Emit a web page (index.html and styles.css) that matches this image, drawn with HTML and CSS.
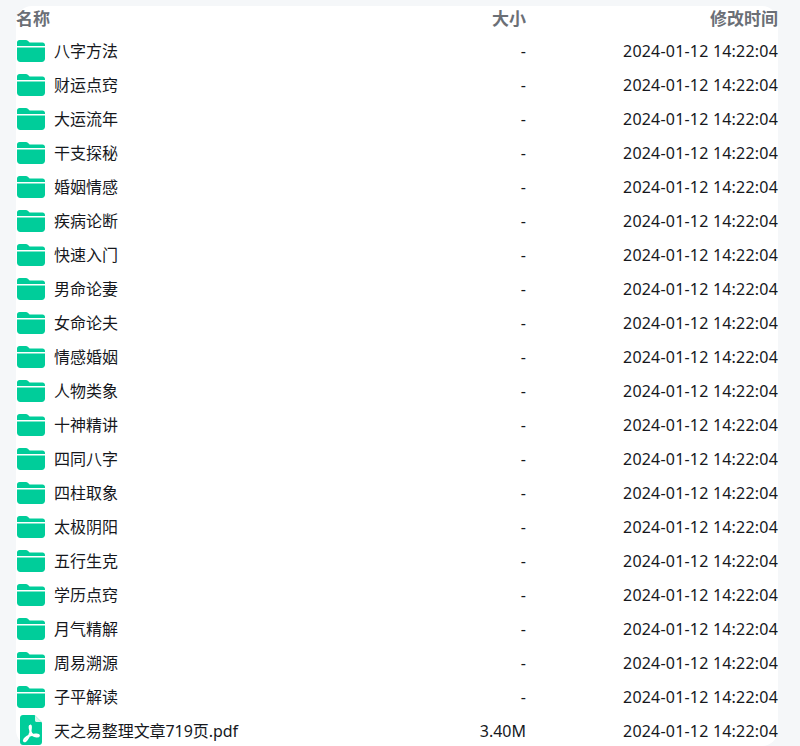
FILE: index.html
```html
<!DOCTYPE html>
<html lang="zh-CN">
<head>
<meta charset="utf-8">
<title>文件列表</title>
<link rel="stylesheet" href="styles.css">
</head>
<body>
<svg class="defs" width="0" height="0" aria-hidden="true">
  <symbol id="folder" viewBox="0 0 28 22">
    <path d="M0 2.500C0 1.100 1.100 0 2.500 0h6.300c.9 0 1.700.3 2.300.9l1.500 1.500h12.900C26.900 2.400 28 3.500 28 4.900v1.100H0z"/>
    <path d="M0 7.500h28v11.300c0 1.800-1.400 3.200-3.200 3.200H3.200C1.400 22 0 20.600 0 18.800z"/>
  </symbol>
  <symbol id="pdf" viewBox="0 0 22 30">
    <path d="M3 0h11.500L22 7.500V27c0 1.700-1.300 3-3 3H3c-1.700 0-3-1.300-3-3V3c0-1.700 1.300-3 3-3z"/>
    <path class="pdf-fold" d="M15 .5 21.500 7H16.500c-.8 0-1.500-.7-1.500-1.500z"/>
    <path class="pdf-mark" d="M10.300 10.500c-1.200.4-.6 3.300 0 5.300.6 2 1.400 3.600 2.800 4.700 1.400 1 5.500 1.500 5.800.2.300-1.400-4-1.500-7.300-.8-3.300.7-6.300 2.700-7.400 4.700-.9 1.500.3 2.100 1.400 1.300 1.700-1.200 3.600-5 4.500-8.100.7-2.700 1.300-7.700.2-7.300z"/>
  </symbol>
</svg>
<main class="card">
  <div class="row head"><span>名称</span><span>大小</span><span>修改时间</span></div>
  <div class="row"><span class="name"><svg class="ico"><use href="#folder"/></svg>八字方法</span><span>-</span><span class="date">2024-01-12 14:22:04</span></div>
  <div class="row"><span class="name"><svg class="ico"><use href="#folder"/></svg>财运点窍</span><span>-</span><span class="date">2024-01-12 14:22:04</span></div>
  <div class="row"><span class="name"><svg class="ico"><use href="#folder"/></svg>大运流年</span><span>-</span><span class="date">2024-01-12 14:22:04</span></div>
  <div class="row"><span class="name"><svg class="ico"><use href="#folder"/></svg>干支探秘</span><span>-</span><span class="date">2024-01-12 14:22:04</span></div>
  <div class="row"><span class="name"><svg class="ico"><use href="#folder"/></svg>婚姻情感</span><span>-</span><span class="date">2024-01-12 14:22:04</span></div>
  <div class="row"><span class="name"><svg class="ico"><use href="#folder"/></svg>疾病论断</span><span>-</span><span class="date">2024-01-12 14:22:04</span></div>
  <div class="row"><span class="name"><svg class="ico"><use href="#folder"/></svg>快速入门</span><span>-</span><span class="date">2024-01-12 14:22:04</span></div>
  <div class="row"><span class="name"><svg class="ico"><use href="#folder"/></svg>男命论妻</span><span>-</span><span class="date">2024-01-12 14:22:04</span></div>
  <div class="row"><span class="name"><svg class="ico"><use href="#folder"/></svg>女命论夫</span><span>-</span><span class="date">2024-01-12 14:22:04</span></div>
  <div class="row"><span class="name"><svg class="ico"><use href="#folder"/></svg>情感婚姻</span><span>-</span><span class="date">2024-01-12 14:22:04</span></div>
  <div class="row"><span class="name"><svg class="ico"><use href="#folder"/></svg>人物类象</span><span>-</span><span class="date">2024-01-12 14:22:04</span></div>
  <div class="row"><span class="name"><svg class="ico"><use href="#folder"/></svg>十神精讲</span><span>-</span><span class="date">2024-01-12 14:22:04</span></div>
  <div class="row"><span class="name"><svg class="ico"><use href="#folder"/></svg>四同八字</span><span>-</span><span class="date">2024-01-12 14:22:04</span></div>
  <div class="row"><span class="name"><svg class="ico"><use href="#folder"/></svg>四柱取象</span><span>-</span><span class="date">2024-01-12 14:22:04</span></div>
  <div class="row"><span class="name"><svg class="ico"><use href="#folder"/></svg>太极阴阳</span><span>-</span><span class="date">2024-01-12 14:22:04</span></div>
  <div class="row"><span class="name"><svg class="ico"><use href="#folder"/></svg>五行生克</span><span>-</span><span class="date">2024-01-12 14:22:04</span></div>
  <div class="row"><span class="name"><svg class="ico"><use href="#folder"/></svg>学历点窍</span><span>-</span><span class="date">2024-01-12 14:22:04</span></div>
  <div class="row"><span class="name"><svg class="ico"><use href="#folder"/></svg>月气精解</span><span>-</span><span class="date">2024-01-12 14:22:04</span></div>
  <div class="row"><span class="name"><svg class="ico"><use href="#folder"/></svg>周易溯源</span><span>-</span><span class="date">2024-01-12 14:22:04</span></div>
  <div class="row"><span class="name"><svg class="ico"><use href="#folder"/></svg>子平解读</span><span>-</span><span class="date">2024-01-12 14:22:04</span></div>
  <div class="row"><span class="name name-file"><svg class="ico ico-pdf"><use href="#pdf"/></svg>天之易整理文章719页.pdf</span><span>3.40M</span><span class="date">2024-01-12 14:22:04</span></div>
</main>
</body>
</html>
```
FILE: styles.css
```css
html, body {
  margin: 0;
  height: 100%;
  overflow: hidden;
  background: #f5f7f9;
}
body {
  padding: 6px 22px 0 16px;
  box-sizing: border-box;
  font-family: "Noto Sans", "Noto Sans CJK SC", sans-serif;
  font-size: 16px;
  color: #16181d;
}
.defs {
  position: absolute;
}
.card {
  height: 740px;
  box-sizing: border-box;
  background: #fff;
  border-radius: 16px;
}
.row {
  display: grid;
  grid-template-columns: 1fr 120px 252px;
  align-items: center;
  height: 34px;
  line-height: 34px;
  text-align: right;
}
.head {
  height: 28px;
  align-items: start;
  line-height: 26px;
  font-size: 17px;
  font-weight: 700;
  color: #6b6f76;
}
.row > :first-child {
  text-align: left;
}
.name {
  display: flex;
  align-items: center;
  gap: 9px;
  padding-left: 1px;
}
.name-file {
  letter-spacing: -0.07px;
}
.date {
  letter-spacing: 0.2px;
}
.ico {
  flex: none;
  width: 28px;
  height: 22px;
  fill: #00cd9a;
}
.ico-pdf {
  height: 30px;
  margin-bottom: 2px;
  padding: 0 3px;
  box-sizing: border-box;
}
.pdf-fold {
  fill: #d8f7ee;
}
.pdf-mark {
  fill: none;
  stroke: #fff;
  stroke-width: 2;
}
```
